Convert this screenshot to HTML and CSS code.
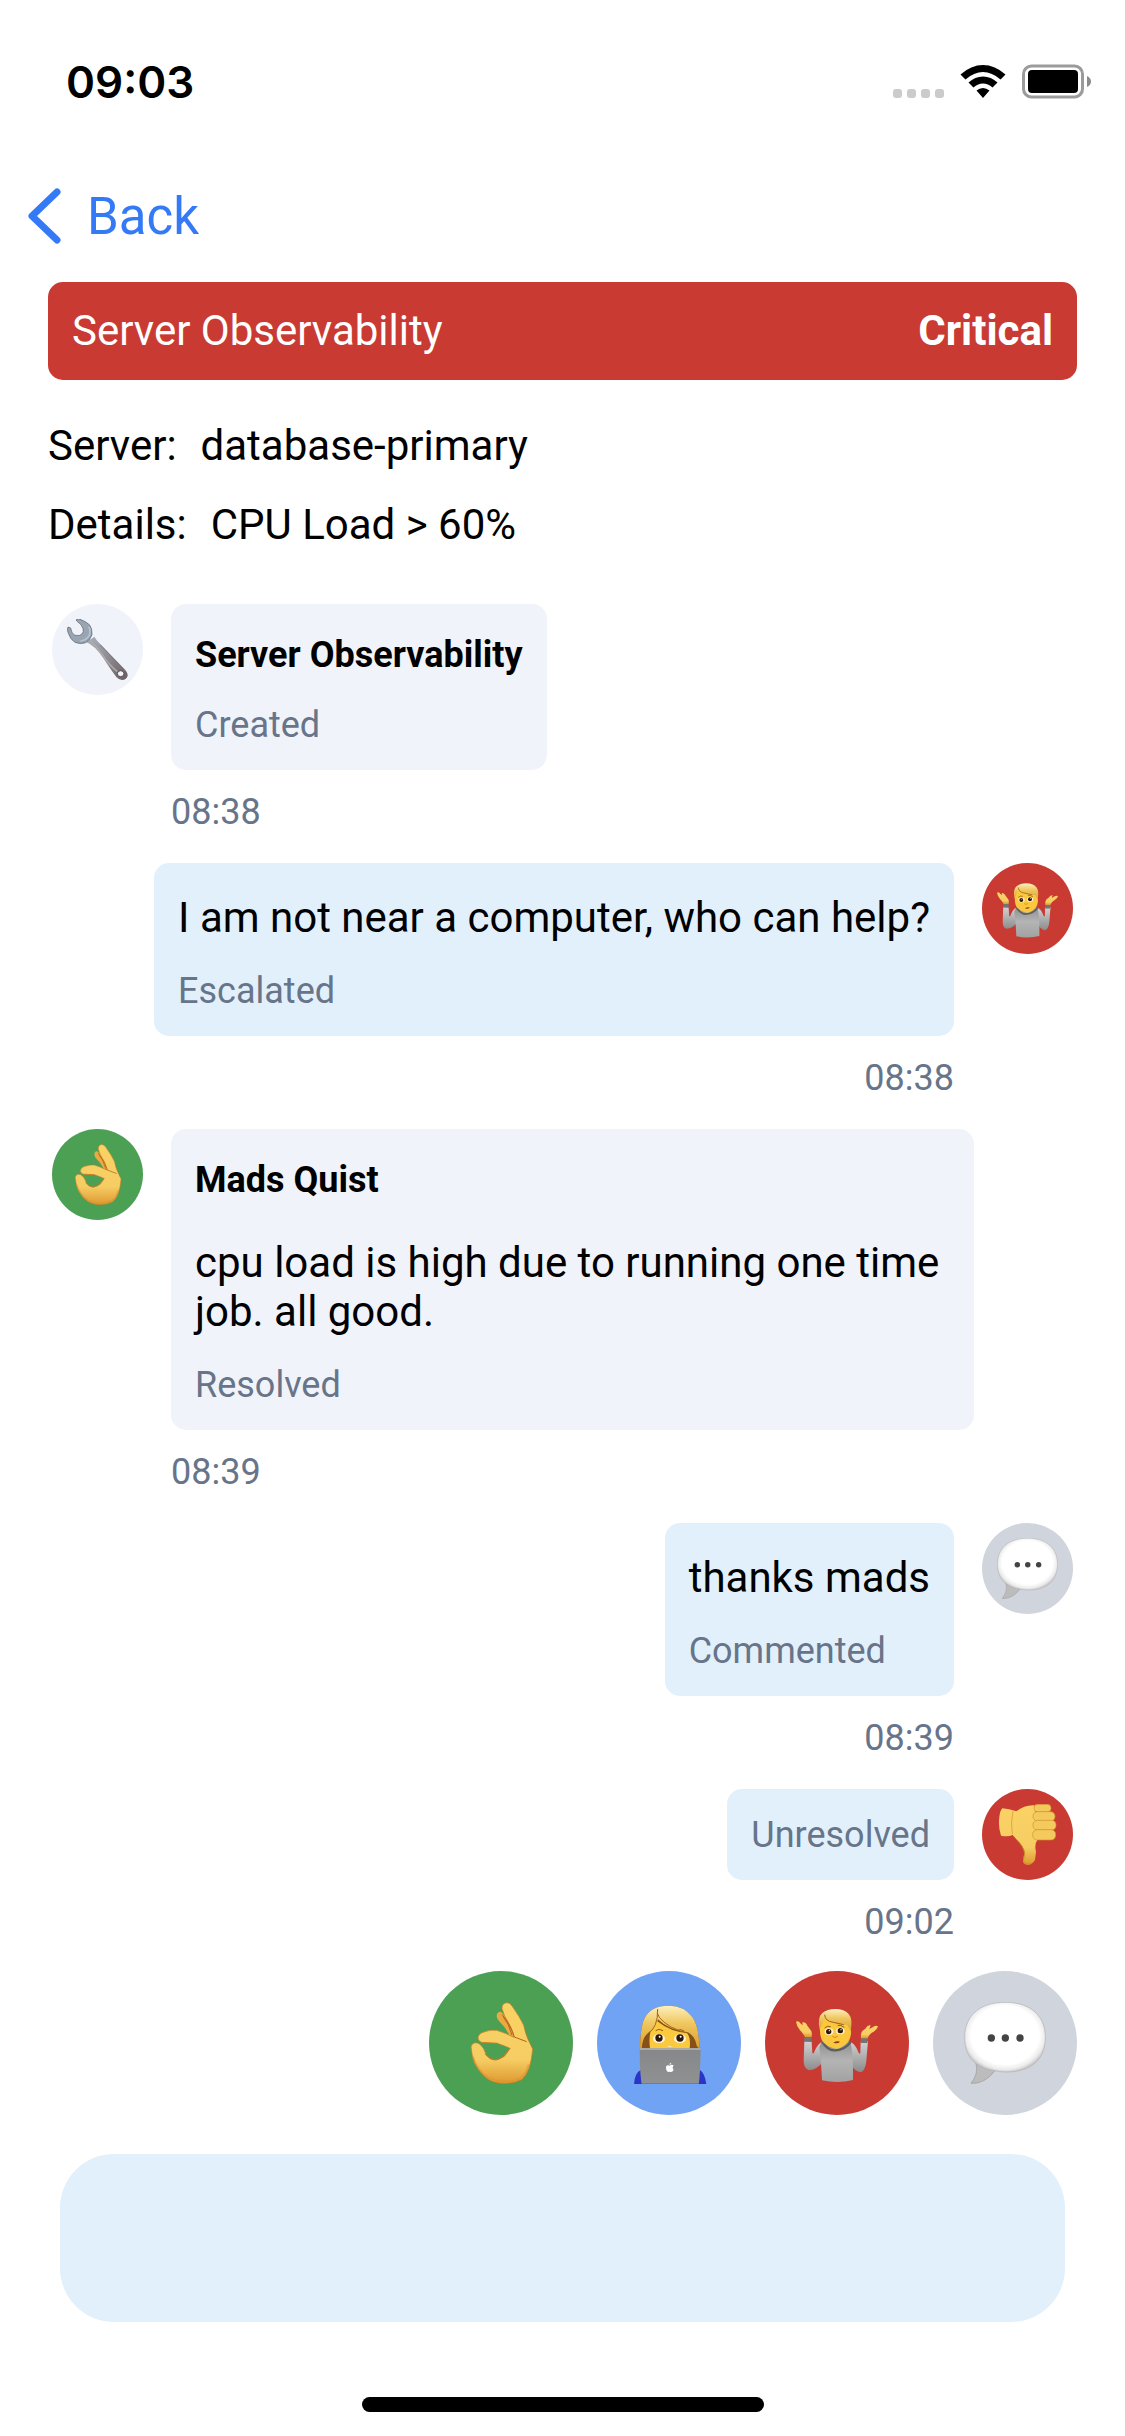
FILE: index.html
```html
<!DOCTYPE html>
<html lang="en">
<head>
  <meta charset="UTF-8">
  <meta name="viewport" content="width=device-width, initial-scale=1">
  <title>Server Observability</title>
  <link rel="stylesheet" href="styles.css">
</head>
<body>

<!-- shared emoji drawings -->
<svg class="sprite" aria-hidden="true">
  <defs>
    <linearGradient id="skin" x1="0" y1="0" x2="0" y2="1">
      <stop offset="0" stop-color="#fbd264"/>
      <stop offset="0.7" stop-color="#f6cd63"/>
      <stop offset="1" stop-color="#dd982f"/>
    </linearGradient>
    <linearGradient id="hair" x1="0" y1="0" x2="0" y2="1">
      <stop offset="0" stop-color="#fdf0bf"/>
      <stop offset="0.4" stop-color="#f0c860"/>
      <stop offset="1" stop-color="#d99c2c"/>
    </linearGradient>
    <linearGradient id="shirt" x1="0" y1="0" x2="0" y2="1">
      <stop offset="0" stop-color="#8b8b8b"/>
      <stop offset="0.5" stop-color="#b4b4b4"/>
      <stop offset="1" stop-color="#a2a2a2"/>
    </linearGradient>
    <linearGradient id="sleeve" x1="0" y1="0" x2="0" y2="1">
      <stop offset="0" stop-color="#d2d2d2"/>
      <stop offset="1" stop-color="#8c8c8c"/>
    </linearGradient>
    <linearGradient id="steel" x1="0" y1="0" x2="1" y2="1">
      <stop offset="0" stop-color="#a9b3c0"/>
      <stop offset="0.5" stop-color="#8d8c93"/>
      <stop offset="1" stop-color="#685c5e"/>
    </linearGradient>
    <linearGradient id="lid" x1="0" y1="0" x2="0" y2="1">
      <stop offset="0" stop-color="#858789"/>
      <stop offset="1" stop-color="#8f9193"/>
    </linearGradient>
    <radialGradient id="bubble" cx="0.5" cy="0.47" r="0.56">
      <stop offset="0.75" stop-color="#ffffff"/>
      <stop offset="0.88" stop-color="#ececec"/>
      <stop offset="1" stop-color="#b4b4b4"/>
    </radialGradient>
  </defs>

  <symbol id="wrench" viewBox="81 59 183 183">
    <path d="M148 123 L163 112 Q170 124 181 134 L250 206 Q264 219 263 229 Q260 241 246 242 Q236 241 229 233 Q213 212 190 176 Q166 139 137 127 Z" fill="url(#steel)"/>
    <path d="M145 119 Q167 138 187 166 Q208 198 232 217" fill="none" stroke="#b3a9aa" stroke-width="5"/>
    <path d="M181 137 L250 209" fill="none" stroke="#6d6f78" stroke-width="2"/>
    <path d="M110 59 L116 58 Q140 67 149 77 Q157 88 156 106 Q151 121 137 130 Q121 136 105 129 Q92 122 85 102 Q80 90 84 83 L92 86 Q94 103 105 108 Q120 111 126 104 Q132 98 129 88 Q127 76 110 65 Z" fill="#99a5b3" stroke="#555a64" stroke-width="2"/>
    <path d="M146 82 Q154 96 147 110 Q137 123 121 125" fill="none" stroke="#b7c2ce" stroke-width="5"/>
    <ellipse cx="242" cy="223" rx="10" ry="9" fill="#f0f3f9" stroke="#57494b" stroke-width="3"/>
  </symbol>

  <symbol id="ok-hand" viewBox="114 129 246 246">
    <path d="M226 163 Q233 154 241 162 L262 185 Q276 213 280 236 L262 228 Q249 203 229 184 Q221 173 226 163 Z" fill="#e9aa44"/>
    <path d="M240 149 Q239 134 253 131 Q263 130 270 141 Q293 173 305 199 Q311 233 332 270 Q329 303 322 325 Q314 349 299 362 Q276 374 247 374 Q216 373 198 361 Q173 342 157 310 Q149 287 147 264 Q149 252 160 251 Q170 251 176 258 Q184 264 193 288 Q203 301 216 303 Q236 301 248 291 Q259 276 264 268 Q246 260 226 253 L181 251 Q168 247 168 237 Q169 225 183 220 Q205 211 224 214 Q251 222 276 235 Q273 211 248 171 Z" fill="url(#skin)" stroke="#c67a22" stroke-width="2"/>
    <path d="M240 166 Q268 201 277 234 L314 248 M243 172 Q261 194 270 228" fill="none" stroke="#b5651b" stroke-width="3"/>
    <path d="M153 293 Q165 335 199 356 Q246 380 294 358 Q314 346 320 316" fill="none" stroke="#dd942d" stroke-width="6" opacity="0.6"/>
    <path d="M189 285 Q203 303 222 303 Q243 299 264 268 M181 251 L226 253" fill="none" stroke="#c67a22" stroke-width="3"/>
  </symbol>

  <symbol id="technologist" viewBox="618 129 246 246">
    <path d="M636 378 Q637 342 657 332 H833 Q850 343 853 378 Z" fill="#2a35c8"/>
    <path d="M654 270 Q654 222 663 190 Q677 145 727 141 Q780 134 811 174 Q832 204 832 270 Z" fill="#875016"/>
    <path d="M684 268 Q679 228 690 207 L706 187 Q746 219 795 222 Q807 237 803 268 Z" fill="#fbc93d"/>
    <path d="M654 270 Q654 222 663 190 Q677 145 727 141 Q780 134 811 174 Q832 204 832 270 L824 260 Q819 230 797 220 Q740 213 708 181 Q702 207 675 225 Q661 238 659 270 Z" fill="url(#hair)"/>
    <path d="M707 151 Q698 174 747 204 Q775 218 797 222 M707 151 Q708 207 677 224" fill="none" stroke="#a26819" stroke-width="3"/>
    <path d="M701 215 Q711 207 723 215 M765 215 Q776 208 786 216" fill="none" stroke="#9a5a12" stroke-width="3"/>
    <ellipse cx="711" cy="239" rx="18" ry="13" fill="#fff4dd"/>
    <ellipse cx="774" cy="239" rx="18" ry="13" fill="#fff4dd"/>
    <circle cx="711" cy="237" r="11" fill="#2a1507"/>
    <circle cx="774" cy="237" r="11" fill="#2a1507"/>
    <circle cx="713" cy="233" r="3" fill="#ffffff"/>
    <circle cx="776" cy="233" r="3" fill="#ffffff"/>
    <path d="M736 264 Q743 257 750 264 Z" fill="#ffe5a0"/>
    <path d="M656 268 H833 Q836 269 836 274 Q835 335 831 370 Q830 377 824 377 H665 Q659 377 658 370 Q653 328 653 274 Q653 269 656 268 Z" fill="url(#lid)"/>
    <path d="M654 270 H835" stroke="#b5b7b8" stroke-width="4"/>
    <path d="M658 375 H830" stroke="#626466" stroke-width="3"/>
    <path d="M743 320 Q750 315 755 320 Q749 326 755 332 Q751 340 746 339 Q742 337 739 339 Q733 338 732 328 Q731 316 743 320 Z M742 318 Q742 312 748 311 Q748 316 742 318 Z" fill="#ffffff"/>
  </symbol>

  <symbol id="shrug" viewBox="132 129 246 246">
    <path d="M157 246 L179 248 L181 281 Q184 288 188 276 Q198 252 212 248 L214 307 Q196 332 171 334 Q155 329 155 306 Z" fill="url(#sleeve)"/>
    <path d="M348 246 L326 248 L325 281 Q322 289 318 277 Q310 254 293 248 L301 324 Q315 341 328 339 Q340 333 343 306 Z" fill="url(#sleeve)"/>
    <path d="M209 247 Q252 235 294 248 Q304 275 303 363 Q258 374 210 364 Q207 300 202 265 Z" fill="url(#shirt)"/>
    <path d="M210 247 Q228 277 251 274 Q278 273 296 249" fill="none" stroke="#5e5e5e" stroke-width="7"/>
    <path d="M158 233 H179 V248 H156 Z M327 237 H348 L346 252 H326 Z" fill="#737373"/>
    <path d="M132 188 Q140 184 145 193 L152 199 L151 190 Q162 189 166 200 L174 211 Q182 218 179 234 H159 Q154 224 144 214 Q134 202 132 188 Z" fill="url(#skin)"/>
    <path d="M378 202 Q372 198 363 204 L352 210 L356 199 Q347 197 340 209 L331 216 Q325 224 327 238 H347 Q351 225 365 218 Q377 210 378 202 Z" fill="url(#skin)"/>
    <path d="M204 196 Q211 169 250 166 Q296 170 297 211 Q299 237 286 251 Q267 269 251 269 Q231 266 213 249 Q202 235 204 196 Z" fill="#fbc83d"/>
    <path d="M203 212 Q195 176 211 162 Q230 147 262 151 Q288 155 296 175 Q301 194 295 218 Q293 207 286 198 Q245 198 221 181 Q211 184 211 193 Z" fill="url(#hair)"/>
    <path d="M218 167 Q219 187 244 190 L275 197" fill="none" stroke="#9d6214" stroke-width="3"/>
    <path d="M218 207 Q225 199 236 203 M257 199 Q266 197 277 205" fill="none" stroke="#995810" stroke-width="3"/>
    <ellipse cx="231" cy="218" rx="13" ry="10" fill="#fff1d4"/>
    <ellipse cx="265" cy="216" rx="13" ry="10" fill="#fff1d4"/>
    <circle cx="230" cy="218" r="8" fill="#2d1808"/>
    <circle cx="265" cy="215" r="8" fill="#2d1808"/>
    <circle cx="232" cy="215" r="2" fill="#ffffff"/>
    <circle cx="267" cy="212" r="2" fill="#ffffff"/>
    <path d="M241 232 Q249 239 257 232" fill="none" stroke="#d08a1d" stroke-width="3"/>
    <path d="M244 251 Q254 245 264 248 Q258 256 244 251 Z" fill="#874018"/>
  </symbol>

  <symbol id="speech" viewBox="636 129 246 246">
    <path d="M672 312 Q680 345 657 373 Q698 376 731 333 Z" fill="#bcbcbc" stroke="#9a9a9a" stroke-width="2"/>
    <path d="M759 130 C838 130 880 172 880 235 C880 301 838 339 762 339 Q744 339 728 335 Q702 334 673 315 C648 295 638 269 638 235 C638 172 681 130 759 130 Z" fill="url(#bubble)" stroke="#b0b0b0" stroke-width="2"/>
    <circle cx="718" cy="237" r="11" fill="#444444"/>
    <circle cx="760" cy="237" r="11" fill="#444444"/>
    <circle cx="804" cy="237" r="11" fill="#444444"/>
  </symbol>

  <symbol id="thumb-down" viewBox="81 74 183 183">
    <path d="M97 87 Q117 88 139 96 Q164 76 194 78 L204 178 Q192 194 198 218 L195 242 Q187 256 173 257 Q158 255 159 244 L164 219 Q159 198 139 180 L128 167 Q113 174 93 169 Q84 143 88 113 Q90 94 97 87 Z" fill="url(#skin)"/>
    <path d="M139 180 Q162 203 164 223 L160 243 Q166 258 184 253" fill="none" stroke="#c98c29" stroke-width="3"/>
    <path d="M129 96 Q121 129 127 165" fill="none" stroke="#e0a83f" stroke-width="3"/>
    <g fill="#f4ca5d" stroke="#cd922d" stroke-width="2">
      <rect x="192" y="75" width="51" height="23" rx="11"/>
      <rect x="189" y="97" width="66" height="28" rx="13"/>
      <rect x="189" y="123" width="69" height="29" rx="13"/>
      <rect x="188" y="151" width="69" height="31" rx="14"/>
    </g>
  </symbol>
</svg>

<div class="screen">
  <div class="status-bar">
    <span class="clock">09:03</span>
    <svg class="status-icons" viewBox="0 0 200 36" aria-hidden="true">
      <g fill="#cbcbcb">
        <rect x="0" y="25" width="9" height="9" rx="3"/>
        <rect x="14" y="25" width="9" height="9" rx="3"/>
        <rect x="28" y="25" width="9" height="9" rx="3"/>
        <rect x="42" y="25" width="9" height="9" rx="3"/>
      </g>
      <path d="M67.500 10.500 Q78 1 90 1 Q102 1 112.500 10.500 L107.500 15.500 Q99 8 90 8 Q81 8 72.500 15.500 Z M75.500 18.500 Q82 12.500 90 12.500 Q98 12.500 104.500 18.500 L99.500 23.500 Q95 19.500 90 19.500 Q85 19.500 80.500 23.500 Z M83.500 26.500 Q86.500 24 90 24 Q93.500 24 96.500 26.500 L90 34 Z"/>
      <rect x="130.500" y="2" width="59" height="31" rx="8" fill="none" stroke="#9b9b9b" stroke-width="3"/>
      <rect x="135" y="6" width="50" height="23" rx="4"/>
      <path d="M194 12 Q198 14 198 17.500 Q198 21 194 23 Z" fill="#8c8c8c"/>
    </svg>
  </div>

  <a class="back" href="#">
    <svg class="chevron" viewBox="0 0 34 56" aria-hidden="true">
      <path d="M30 4 L5 28 L30 52"/>
    </svg>
    Back
  </a>

  <header class="alert">
    <span>Server Observability</span>
    <strong>Critical</strong>
  </header>

  <dl class="info">
    <div><dt>Server:</dt><dd>database-primary</dd></div>
    <div><dt>Details:</dt><dd>CPU Load &gt; 60%</dd></div>
  </dl>

  <main class="timeline">
    <article class="entry">
      <div class="avatar plain"><svg><use href="#wrench"/></svg></div>
      <div class="entry-body">
        <div class="bubble">
          <h2>Server Observability</h2>
          <p class="state">Created</p>
        </div>
        <time>08:38</time>
      </div>
    </article>

    <article class="entry own">
      <div class="avatar red"><svg><use href="#shrug"/></svg></div>
      <div class="entry-body">
        <div class="bubble">
          <p class="message">I am not near a computer, who can help?</p>
          <p class="state">Escalated</p>
        </div>
        <time>08:38</time>
      </div>
    </article>

    <article class="entry">
      <div class="avatar green"><svg><use href="#ok-hand"/></svg></div>
      <div class="entry-body">
        <div class="bubble">
          <h2>Mads Quist</h2>
          <p class="message">cpu load is high due to running one time job. all good.</p>
          <p class="state">Resolved</p>
        </div>
        <time>08:39</time>
      </div>
    </article>

    <article class="entry own">
      <div class="avatar gray"><svg><use href="#speech"/></svg></div>
      <div class="entry-body">
        <div class="bubble">
          <p class="message">thanks mads</p>
          <p class="state">Commented</p>
        </div>
        <time>08:39</time>
      </div>
    </article>

    <article class="entry own">
      <div class="avatar red"><svg><use href="#thumb-down"/></svg></div>
      <div class="entry-body">
        <div class="bubble">
          <p class="state">Unresolved</p>
        </div>
        <time>09:02</time>
      </div>
    </article>
  </main>

  <div class="actions">
    <button class="green" type="button" aria-label="Resolve"><svg><use href="#ok-hand"/></svg></button>
    <button class="blue" type="button" aria-label="Acknowledge"><svg><use href="#technologist"/></svg></button>
    <button class="red" type="button" aria-label="Escalate"><svg><use href="#shrug"/></svg></button>
    <button class="gray" type="button" aria-label="Comment"><svg><use href="#speech"/></svg></button>
  </div>

  <textarea class="comment" aria-label="Comment text"></textarea>

  <div class="home-indicator"></div>
</div>

</body>
</html>
```

FILE: styles.css
```css
* {
  box-sizing: border-box;
}

body {
  margin: 0;
  background: #fff;
  color: #000;
  font-family: Roboto, "Liberation Sans", sans-serif;
  font-size: 42px;
  line-height: 49px;
}

h2, p, dl, dd {
  margin: 0;
}

.sprite {
  position: absolute;
  width: 0;
  height: 0;
}

.screen {
  display: flex;
  flex-direction: column;
  min-height: 100vh;
}

.status-bar {
  display: flex;
  justify-content: space-between;
  align-items: center;
  height: 164px;
  padding: 0 32px 0 66px;
}

.clock {
  font-family: Inter, Roboto, sans-serif;
  font-size: 44px;
  font-weight: 600;
}

.status-icons {
  width: 200px;
  height: 36px;
}

.back {
  display: flex;
  align-items: center;
  align-self: flex-start;
  gap: 26px;
  height: 104px;
  margin-bottom: 14px;
  padding-left: 27px;
  color: #347af6;
  font-size: 51px;
  text-decoration: none;
}

.chevron {
  width: 34px;
  height: 56px;
  fill: none;
  stroke: #347af6;
  stroke-width: 7;
  stroke-linecap: round;
  stroke-linejoin: round;
}

.alert {
  display: flex;
  justify-content: space-between;
  align-items: center;
  height: 98px;
  margin: 0 48px;
  padding: 0 24px 2px;
  border-radius: 15px;
  background: #c93a32;
  color: #fff;
}

.info {
  display: grid;
  gap: 30px;
  padding: 41px 48px 55px;
}

.info div {
  display: flex;
  gap: 24px;
}

.timeline {
  padding: 0 52px;
}

.entry {
  display: flex;
  align-items: flex-start;
  gap: 28px;
  margin-bottom: 30px;
}

.entry:last-child {
  margin-bottom: 28px;
}

.own {
  flex-direction: row-reverse;
}

.avatar {
  display: grid;
  place-items: center;
  flex: none;
  width: 91px;
  height: 91px;
  border-radius: 50%;
}

.avatar svg {
  width: 61px;
  height: 61px;
}

.entry-body {
  display: flex;
  flex: 1;
  flex-direction: column;
  align-items: flex-start;
}

.own .entry-body {
  align-items: flex-end;
}

.bubble {
  max-width: 89%;
  padding: 25px 24px 24px;
  border-radius: 15px;
  background: #f0f3f9;
}

.own .bubble {
  background: #e2f0fc;
}

.bubble h2 {
  margin: 5px 0 28px;
  font-size: 36px;
  line-height: 42px;
}

.message {
  margin: 5px 0 28px;
}

.bubble h2 + .message {
  margin-top: 37px;
}

.state,
time {
  color: #677489;
  font-size: 36px;
  line-height: 42px;
}

time {
  margin-top: 21px;
}

.plain { background: #f0f3f9; }
.red { background: #c93a32; }
.green { background: #4ca054; }
.blue { background: #71a3f4; }
.gray { background: #d0d4dd; }

.actions {
  display: flex;
  justify-content: flex-end;
  gap: 24px;
  padding: 0 48px;
}

.actions button {
  display: grid;
  place-items: center;
  width: 144px;
  height: 144px;
  padding: 0;
  border: none;
  border-radius: 50%;
  cursor: pointer;
}

.actions svg {
  width: 82px;
  height: 82px;
}

.comment {
  height: 168px;
  margin: 39px 60px 0;
  padding: 36px 48px;
  border: none;
  border-radius: 54px;
  background: #e2f0fc;
  font: inherit;
  resize: none;
}

.home-indicator {
  width: 402px;
  height: 15px;
  margin: auto auto 24px;
  border-radius: 8px;
  background: #000;
}
```
